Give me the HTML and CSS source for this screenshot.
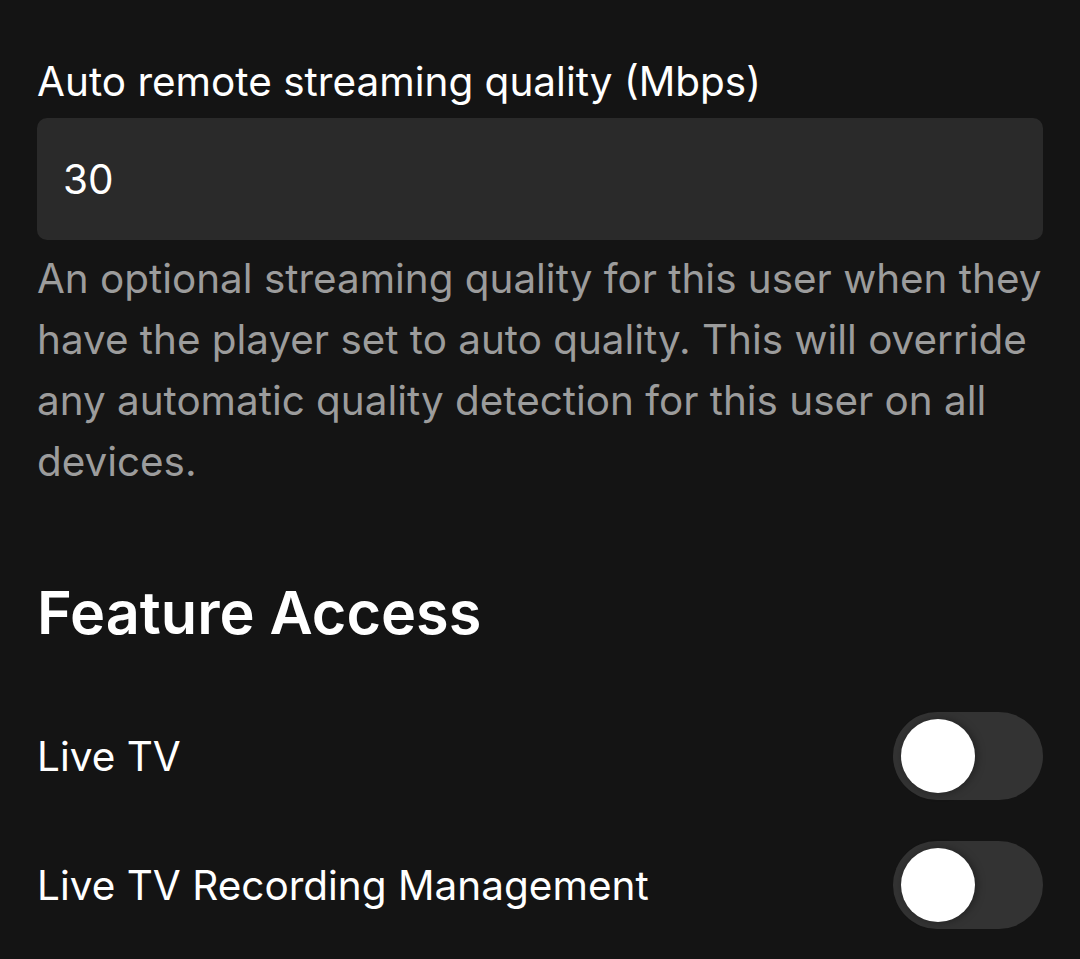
FILE: index.html
```html
<!DOCTYPE html>
<html>
<head>
<meta charset="utf-8">
<link rel="stylesheet" href="styles.css">
</head>
<body>
<div class="page">
  <div class="field">
    <label class="field-label">Auto remote streaming quality (Mbps)</label>
    <div class="input">30</div>
    <p class="help">An optional streaming quality for this user when they have the player set to auto quality. This will override any automatic quality detection for this user on all devices.</p>
  </div>
  <h2 class="section-title">Feature Access</h2>
  <div class="toggle-row">
    <span class="toggle-label">Live TV</span>
    <span class="toggle"><span class="knob"></span></span>
  </div>
  <div class="toggle-row">
    <span class="toggle-label">Live TV Recording Management</span>
    <span class="toggle"><span class="knob"></span></span>
  </div>
</div>
</body>
</html>
```

FILE: styles.css
```css
html, body {
  margin: 0;
  background: #141414;
}
body {
  font-family: Inter, "Noto Sans", sans-serif;
  color: #ffffff;
}
.page {
  padding: 52px 37px 0 37px;
  display: flex;
  flex-direction: column;
}
.field {
  display: flex;
  flex-direction: column;
}
.field-label {
  font-size: 40.5px;
  line-height: 60px;
}
.input {
  margin-top: 6px;
  height: 122px;
  box-sizing: border-box;
  background: #2a2a2a;
  border-radius: 10px;
  padding: 0 26px;
  display: flex;
  align-items: center;
  font-size: 40.5px;
}
.help {
  margin: 8px -12px 0 0;
  color: #9c9c9c;
  font-size: 40.4px;
  line-height: 61px;
}
.section-title {
  margin: 80px 0 0 0;
  font-size: 59.4px;
  font-weight: 600;
  line-height: 80px;
}
.toggle-row {
  display: flex;
  align-items: center;
  justify-content: space-between;
  height: 88px;
  margin-top: 60px;
}
.toggle-row + .toggle-row {
  margin-top: 41px;
}
.toggle-label {
  font-size: 40.5px;
}
.toggle {
  width: 150px;
  height: 88px;
  border-radius: 44px;
  background: #333333;
  display: flex;
  align-items: center;
  padding-left: 8px;
  box-sizing: border-box;
}
.knob {
  width: 74px;
  height: 74px;
  border-radius: 50%;
  background: #ffffff;
  box-shadow: 2px 0 8px rgba(0,0,0,0.35);
}
```
